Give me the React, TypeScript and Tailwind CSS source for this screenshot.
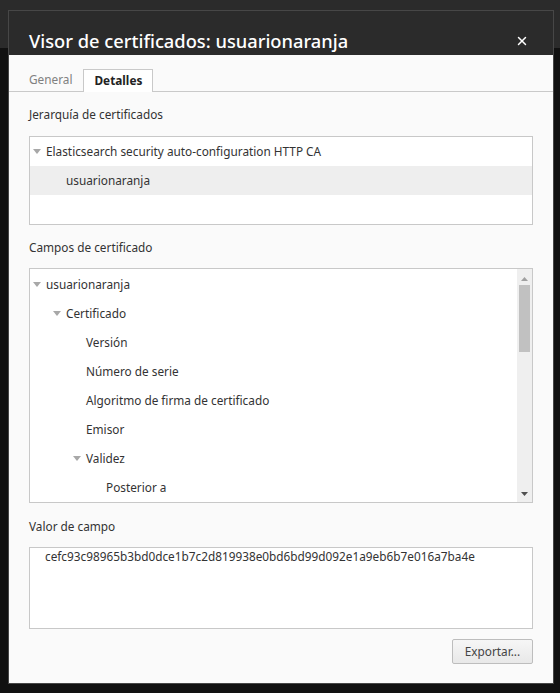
import { X } from 'lucide-react'

const font = { fontFamily: '"Noto Sans", "Open Sans", sans-serif' }

type Row = { label: string; level: number; open?: boolean; selected?: boolean }

const hierarchy: Row[] = [
  { label: 'Elasticsearch security auto-configuration HTTP CA', level: 0, open: true },
  { label: 'usuarionaranja', level: 1, selected: true },
]

const fields: Row[] = [
  { label: 'usuarionaranja', level: 0, open: true },
  { label: 'Certificado', level: 1, open: true },
  { label: 'Versión', level: 2 },
  { label: 'Número de serie', level: 2 },
  { label: 'Algoritmo de firma de certificado', level: 2 },
  { label: 'Emisor', level: 2 },
  { label: 'Validez', level: 2, open: true },
  { label: 'Posterior a', level: 3 },
]

function Triangle() {
  return (
    <svg width="8" height="5" viewBox="0 0 8 5" className="shrink-0">
      <path d="M0 0 H8 L4 5 Z" fill="#a8a8a8" />
    </svg>
  )
}

function TreeRow({ row }: { row: Row }) {
  const indent = 3 + row.level * 20
  return (
    <div
      className={`flex items-center h-[29px] text-[11.8px] text-[#333] ${row.selected ? 'bg-[#eeeeee]' : ''}`}
      style={{ paddingLeft: row.open ? indent : indent + 13 }}
    >
      {row.open && <span className="mr-[5px] flex"><Triangle /></span>}
      <span>{row.label}</span>
    </div>
  )
}

export default function App() {
  return (
    <div className="relative w-[560px] h-[693px] bg-[#111111] overflow-hidden" style={font}>
      <div className="h-[48px] bg-[#2b2b2b]" />
      <div className="absolute left-[8px] top-[10px] w-[546px] h-[674px] border border-[#474747] flex flex-col bg-[#fafafa]">
        {/* header */}
        <div className="h-[44px] bg-[#2b2b2b] flex items-end justify-between pl-[20px] pr-[24px] pb-[4px]">
          <h1 className="text-[18.3px] font-medium text-white leading-none pb-[1px]">
            Visor de certificados: usuarionaranja
          </h1>
          <X className="text-white mb-[3px]" size={14} strokeWidth={2.5} />
        </div>

        {/* tabs */}
        <div className="flex items-end h-[37px] border-b border-[#c9c9c9] pl-[20px]">
          <div className="pr-[11px] h-[23px] flex items-center text-[11.8px] text-[#808080]">General</div>
          <div className="h-[23px] -mb-px px-[10px] flex items-center bg-white border border-b-0 border-[#c9c9c9] text-[11.8px] font-bold text-[#222]">
            Detalles
          </div>
        </div>

        <div className="flex flex-col px-[20px] text-[#333]">
          <div className="text-[11.8px] pt-[14px] h-[44px]">Jerarquía de certificados</div>
          <div className="border border-[#c8c8c8] bg-white h-[89px]">
            {hierarchy.map((r) => (
              <TreeRow key={r.label} row={r} />
            ))}
          </div>

          <div className="text-[11.8px] pt-[14px] h-[43px]">Campos de certificado</div>
          <div className="border border-[#c8c8c8] bg-white h-[235px] flex overflow-hidden">
            <div className="flex-1 pt-[1px]">
              {fields.map((r) => (
                <TreeRow key={r.label} row={r} />
              ))}
            </div>
            <div className="w-[15px] bg-[#efefef] flex flex-col items-center pt-[8px] pb-[6px]">
              <svg width="7" height="4" viewBox="0 0 7 4">
                <path d="M0 4 L3.5 0 L7 4 Z" fill="#a0a0a0" />
              </svg>
              <div className="mt-[4px] w-[11px] h-[67px] bg-[#c1c1c1]" />
              <div className="flex-1" />
              <svg width="7" height="4" viewBox="0 0 7 4">
                <path d="M0 0 L7 0 L3.5 4 Z" fill="#505050" />
              </svg>
            </div>
          </div>

          <div className="text-[11.8px] pt-[15px] h-[44px]">Valor de campo</div>
          <div className="border border-[#c8c8c8] bg-white h-[82px] pl-[15px] text-[11.8px] leading-[16px]">
            cefc93c98965b3bd0dce1b7c2d819938e0bd6bd99d092e1a9eb6b7e016a7ba4e
          </div>

          <div className="flex justify-end mt-[10px]">
            <button className="w-[81px] h-[25px] rounded-[2px] border border-[#bdbdbd] bg-gradient-to-b from-[#f6f6f6] to-[#e8e8e8] text-[11.8px] text-[#444]">
              Exportar...
            </button>
          </div>
        </div>
      </div>
    </div>
  )
}
